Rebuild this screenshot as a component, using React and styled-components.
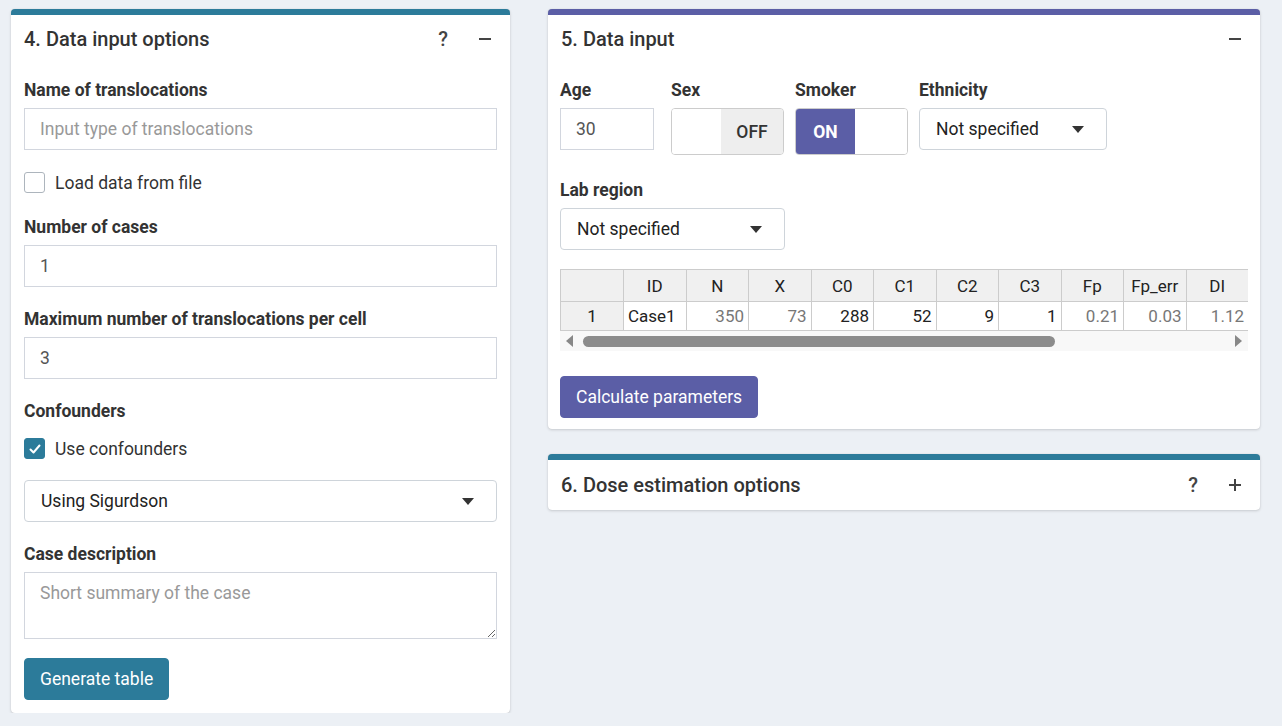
import React from 'react';
import styled, { createGlobalStyle } from 'styled-components';

const TEAL = '#2c7b9a';
const PURPLE = '#5b5ea6';

const GlobalStyle = createGlobalStyle`
  body {
    margin: 0;
    background: #ecf0f5;
    font-family: Roboto, "Liberation Sans", sans-serif;
    color: #333;
  }
  * { box-sizing: border-box; }
`;

const columns = ['ID', 'N', 'X', 'C0', 'C1', 'C2', 'C3', 'Fp', 'Fp_err', 'DI'];
const row = [
  { v: 'Case1', align: 'left' },
  { v: '350', ro: true },
  { v: '73', ro: true },
  { v: '288' },
  { v: '52' },
  { v: '9' },
  { v: '1' },
  { v: '0.21', ro: true },
  { v: '0.03', ro: true },
  { v: '1.12', ro: true },
];

function MinusIcon() {
  return (
    <svg width="14" height="14" viewBox="0 0 14 14">
      <rect x="1" y="6" width="12" height="2" fill="#444" />
    </svg>
  );
}

function PlusIcon() {
  return (
    <svg width="14" height="14" viewBox="0 0 14 14">
      <rect x="1" y="6" width="12" height="2" fill="#444" />
      <rect x="6" y="1" width="2" height="12" fill="#444" />
    </svg>
  );
}

function Caret() {
  return (
    <svg width="12" height="7" viewBox="0 0 12 7">
      <path d="M0 0 L12 0 L6 7 Z" fill="#333" />
    </svg>
  );
}

function Check() {
  return (
    <svg width="14" height="14" viewBox="0 0 14 14">
      <path d="M2.5 7.5 L5.5 10.5 L11.5 3.5" stroke="#fff" strokeWidth="2" fill="none" strokeLinecap="round" strokeLinejoin="round" />
    </svg>
  );
}

function Select({ value, width }) {
  return (
    <SelectBox $width={width}>
      <span>{value}</span>
      <Caret />
    </SelectBox>
  );
}

function CheckOption({ checked, label }) {
  return (
    <CheckRow>
      <CheckBox $checked={checked}>{checked && <Check />}</CheckBox>
      <span>{label}</span>
    </CheckRow>
  );
}

function Toggle({ on }) {
  return (
    <ToggleBox>
      {on ? (
        <>
          <ToggleHalf $on>ON</ToggleHalf>
          <ToggleBlank />
        </>
      ) : (
        <>
          <ToggleBlank />
          <ToggleHalf>OFF</ToggleHalf>
        </>
      )}
    </ToggleBox>
  );
}

export default function App() {
  return (
    <>
      <GlobalStyle />
      <Page>
        <Card $color={TEAL} $width={499}>
          <CardHeader>
            <CardTitle>4. Data input options</CardTitle>
            <Tools>
              <Tool>?</Tool>
              <Tool><MinusIcon /></Tool>
            </Tools>
          </CardHeader>
          <CardBody>
            <FormGroup>
              <Label>Name of translocations</Label>
              <TextInput placeholder="Input type of translocations" />
            </FormGroup>
            <CheckGroup>
              <CheckOption label="Load data from file" />
            </CheckGroup>
            <FormGroup>
              <Label>Number of cases</Label>
              <TextInput defaultValue="1" />
            </FormGroup>
            <FormGroup>
              <Label>Maximum number of translocations per cell</Label>
              <TextInput defaultValue="3" />
            </FormGroup>
            <FormGroup $mb={21}>
              <Label $gap={17}>Confounders</Label>
              <CheckOption checked label="Use confounders" />
            </FormGroup>
            <FormGroup>
              <Select value="Using Sigurdson" />
            </FormGroup>
            <FormGroup $mb={19}>
              <Label>Case description</Label>
              <TextArea placeholder="Short summary of the case" />
            </FormGroup>
            <Button $color={TEAL}>Generate table</Button>
          </CardBody>
        </Card>

        <Column>
          <Card $color={PURPLE}>
            <CardHeader>
              <CardTitle>5. Data input</CardTitle>
              <Tools>
                <Tool><MinusIcon /></Tool>
              </Tools>
            </CardHeader>
            <CardBody $padX={12} $pb={11}>
              <InlineRow>
                <InlineGroup $width={111}>
                  <Label>Age</Label>
                  <TextInput defaultValue="30" style={{ width: 94 }} />
                </InlineGroup>
                <InlineGroup $width={124}>
                  <Label>Sex</Label>
                  <Toggle />
                </InlineGroup>
                <InlineGroup $width={124}>
                  <Label>Smoker</Label>
                  <Toggle on />
                </InlineGroup>
                <InlineGroup>
                  <Label>Ethnicity</Label>
                  <Select value="Not specified" width={188} />
                </InlineGroup>
              </InlineRow>
              <FormGroup $mb={19}>
                <Label>Lab region</Label>
                <Select value="Not specified" width={225} />
              </FormGroup>
              <TableWrap>
                <Grid>
                  <thead>
                    <tr>
                      <HeadCell $w={63} />
                      {columns.map((c) => (
                        <HeadCell key={c}>{c}</HeadCell>
                      ))}
                    </tr>
                  </thead>
                  <tbody>
                    <tr>
                      <RowHead>1</RowHead>
                      {row.map((c, i) => (
                        <Cell key={i} $align={c.align} $ro={c.ro}>{c.v}</Cell>
                      ))}
                    </tr>
                  </tbody>
                </Grid>
                <ScrollBar>
                  <Arrow $dir="left" />
                  <Track>
                    <Thumb style={{ width: 472 }} />
                  </Track>
                  <Arrow $dir="right" />
                </ScrollBar>
              </TableWrap>
              <Button $color={PURPLE}>Calculate parameters</Button>
            </CardBody>
          </Card>

          <Card $color={TEAL}>
            <CardHeader $h={50}>
              <CardTitle>6. Dose estimation options</CardTitle>
              <Tools>
                <Tool>?</Tool>
                <Tool><PlusIcon /></Tool>
              </Tools>
            </CardHeader>
          </Card>
        </Column>
      </Page>
    </>
  );
}

const Page = styled.div`
  display: flex;
  align-items: flex-start;
  gap: 38px;
  padding: 9px 22px 0 11px;
`;

const Column = styled.div`
  width: 712px;
  display: flex;
  flex-direction: column;
  gap: 25px;
`;

const Card = styled.div`
  width: ${({ $width }) => ($width ? `${$width}px` : '100%')};
  background: #fff;
  border-top: 6px solid ${({ $color }) => $color};
  border-radius: 4px;
  box-shadow: 0 0 1px rgba(0, 0, 0, 0.125), 0 1px 3px rgba(0, 0, 0, 0.15);
`;

const CardHeader = styled.div`
  height: ${({ $h }) => $h || 48}px;
  display: flex;
  align-items: center;
  justify-content: space-between;
  padding: 0 13px;
`;

const CardTitle = styled.div`
  font-size: 20px;
  font-weight: 500;
  color: #333;
`;

const Tools = styled.div`
  display: flex;
  align-items: center;
  gap: 20px;
  padding-right: 1px;
`;

const Tool = styled.div`
  width: 22px;
  display: flex;
  justify-content: center;
  align-items: center;
  font-size: 20px;
  font-weight: 500;
  color: #444;
`;

const CardBody = styled.div`
  padding: 17px ${({ $padX }) => $padX || 13}px ${({ $pb }) => $pb || 13}px;
`;

const FormGroup = styled.div`
  margin-bottom: ${({ $mb }) => ($mb === undefined ? 22 : $mb)}px;
`;

const Label = styled.div`
  font-size: 17.5px;
  font-weight: 700;
  line-height: 20px;
  color: #333;
  margin-bottom: ${({ $gap }) => $gap || 8}px;
`;

const TextInput = styled.input`
  display: block;
  width: 100%;
  height: 42px;
  border: 1px solid #d2d6de;
  border-radius: 0;
  padding: 0 15px;
  font-family: inherit;
  font-size: 17.5px;
  color: #555;
  outline: none;
  &::placeholder { color: #999; }
`;

const TextArea = styled.textarea`
  display: block;
  width: 100%;
  height: 67px;
  border: 1px solid #d2d6de;
  border-radius: 0;
  padding: 10px 15px;
  font-family: inherit;
  font-size: 17.5px;
  color: #555;
  outline: none;
  &::placeholder { color: #999; }
`;

const SelectBox = styled.div`
  width: ${({ $width }) => ($width ? `${$width}px` : '100%')};
  height: 42px;
  display: flex;
  align-items: center;
  justify-content: space-between;
  padding: 0 22px 0 16px;
  border: 1px solid #ced4da;
  border-radius: 4px;
  background: #fff;
  font-size: 17.5px;
  color: #222;
`;

const CheckGroup = styled.div`
  margin: 0 0 24px;
`;

const CheckRow = styled.label`
  display: flex;
  align-items: center;
  gap: 10px;
  font-size: 17.5px;
  color: #333;
  line-height: 20px;
`;

const CheckBox = styled.span`
  width: 21px;
  height: 21px;
  display: inline-flex;
  align-items: center;
  justify-content: center;
  border-radius: 3px;
  border: 1px solid ${({ $checked }) => ($checked ? TEAL : '#adb5bd')};
  background: ${({ $checked }) => ($checked ? TEAL : '#fff')};
`;

const Button = styled.button`
  height: 42px;
  padding: 0 15px;
  border: 1px solid ${({ $color }) => $color};
  border-radius: 4px;
  background: ${({ $color }) => $color};
  color: #fff;
  font-family: inherit;
  font-size: 17.5px;
`;

const InlineRow = styled.div`
  display: flex;
  align-items: flex-start;
  margin-bottom: 25px;
`;

const InlineGroup = styled.div`
  width: ${({ $width }) => ($width ? `${$width}px` : 'auto')};
`;

const ToggleBox = styled.div`
  width: 113px;
  height: 47px;
  margin-top: 2px;
  display: flex;
  border: 1px solid #ccc;
  border-radius: 4px;
  overflow: hidden;
`;

const ToggleHalf = styled.div`
  width: ${({ $on }) => ($on ? 59 : 62)}px;
  display: flex;
  align-items: center;
  justify-content: center;
  background: ${({ $on }) => ($on ? PURPLE : '#eee')};
  color: ${({ $on }) => ($on ? '#fff' : '#333')};
  font-size: 17.5px;
  font-weight: ${({ $on }) => ($on ? 700 : 500)};
`;

const ToggleBlank = styled.div`
  flex: 1;
  background: #fff;
`;

const TableWrap = styled.div`
  width: 688px;
  overflow: hidden;
  margin-bottom: 25px;
`;

const Grid = styled.table`
  border-collapse: collapse;
  table-layout: fixed;
  font-size: 17px;
`;

const HeadCell = styled.th`
  width: ${({ $w }) => $w || 62.5}px;
  min-width: ${({ $w }) => $w || 62.5}px;
  height: 32px;
  padding: 0 4px;
  background: #f0f0f0;
  border: 1px solid #ccc;
  font-weight: 400;
  color: #222;
  text-align: center;
`;

const RowHead = styled.td`
  height: 29px;
  background: #f0f0f0;
  border: 1px solid #ccc;
  text-align: center;
  color: #222;
`;

const Cell = styled.td`
  height: 29px;
  padding: 0 4px;
  border: 1px solid #ccc;
  text-align: ${({ $align }) => $align || 'right'};
  color: ${({ $ro }) => ($ro ? '#777' : '#222')};
  white-space: nowrap;
`;

const ScrollBar = styled.div`
  height: 20px;
  display: flex;
  align-items: center;
  background: #f8f8f8;
  padding: 0 6px;
`;

const Arrow = styled.div`
  width: 0;
  height: 0;
  border-top: 6px solid transparent;
  border-bottom: 6px solid transparent;
  ${({ $dir }) =>
    $dir === 'left' ? 'border-right: 7px solid #888;' : 'border-left: 7px solid #888;'}
`;

const Track = styled.div`
  flex: 1;
  padding: 0 5px 0 10px;
`;

const Thumb = styled.div`
  height: 11px;
  border-radius: 6px;
  background: #8c8c8c;
`;
